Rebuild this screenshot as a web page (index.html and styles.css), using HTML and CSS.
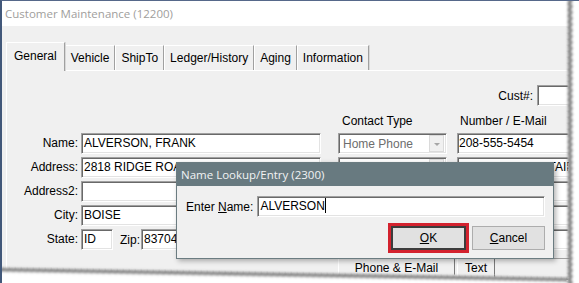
FILE: index.html
```html
<!DOCTYPE html>
<html lang="en">
<head>
  <meta charset="UTF-8" />
  <meta name="viewport" content="width=device-width, initial-scale=1.0"/>
  <title>Customer Maintenance</title>
  <link rel="stylesheet" href="styles.css">
</head>
<body>

<div class="window">
  <div class="titlebar">Customer Maintenance (12200)</div>

  <div class="client">
    <div class="tabs">
      <div class="tab active">General</div>
      <div class="tab">Vehicle</div>
      <div class="tab">ShipTo</div>
      <div class="tab">Ledger/History</div>
      <div class="tab">Aging</div>
      <div class="tab">Information</div>
    </div>

    <div class="panel">
      <div class="form">
        <div class="cust">
          <span>Cust#:</span>
          <div class="field cust-box"></div>
        </div>

        <div class="head-spacer"></div>
        <div class="head head-type">Contact Type</div>
        <div class="head head-num">Number / E-Mail</div>

        <!-- row 1 -->
        <div class="lbl">Name:</div>
        <div class="field wide">ALVERSON, FRANK</div>
        <div class="combo"><span>Home Phone</span><div class="drop"></div></div>
        <div class="field num">208-555-5454</div>

        <!-- row 2 -->
        <div class="lbl">Address:</div>
        <div class="field wide">2818 RIDGE ROAD</div>
        <div class="combo"><span></span><div class="drop"></div></div>
        <div class="field num">FRANK@MOUNTAIN.NET</div>

        <!-- row 3 -->
        <div class="lbl">Address2:</div>
        <div class="field wide"></div>
        <div class="combo"><span></span><div class="drop"></div></div>
        <div class="field num"></div>

        <!-- row 4 -->
        <div class="lbl">City:</div>
        <div class="field city">BOISE</div>
        <div class="combo"><span></span><div class="drop"></div></div>
        <div class="field num"></div>

        <!-- row 5 -->
        <div class="lbl">State:</div>
        <div class="state-zip">
          <div class="field state">ID</div>
          <span class="zip-lbl">Zip:</span>
          <div class="field zip">83704</div>
        </div>
        <div class="combo"><span></span><div class="drop"></div></div>
        <div class="field num"></div>

        <div class="btabs">
          <div class="btab phone">Phone &amp; E-Mail</div>
          <div class="btab">Text</div>
        </div>
      </div>
    </div>
  </div>

  <div class="dialog">
    <div class="dialog-title">Name Lookup/Entry (2300)</div>
    <div class="dialog-body">
      <div class="entry">
        <span class="entry-lbl">Enter <u>N</u>ame:</span>
        <div class="field entry-box">ALVERSON<span class="caret"></span></div>
      </div>
      <div class="buttons">
        <div class="btn btn-ok"><u>O</u>K</div>
        <div class="btn"><u>C</u>ancel</div>
      </div>
    </div>
  </div>

  <!-- torn edges of the screenshot -->
  <svg class="tear" width="579" height="283" viewBox="0 0 579 283">
    <defs>
      <pattern id="edgeRight" x="566" y="0" width="30" height="6" patternUnits="userSpaceOnUse">
        <polygon points="5,0 1,2 3,3 0,5 5,6 30,6 30,0" fill="#fff"/>
      </pattern>
      <pattern id="shadeRight" x="567.5" y="0" width="30" height="6" patternUnits="userSpaceOnUse">
        <polyline points="5,0 1,2 3,3 0,5 5,6" fill="none" stroke="#7d7d7d" stroke-width="2"/>
      </pattern>
      <pattern id="edgeBottom" x="0" y="266" width="6" height="30" patternUnits="userSpaceOnUse">
        <polygon points="0,4 2,1 3,3 5,0 6,4 6,30 0,30" fill="#fff"/>
      </pattern>
      <pattern id="shadeBottom" x="0" y="267.5" width="6" height="30" patternUnits="userSpaceOnUse">
        <polyline points="0,4 2,1 3,3 5,0 6,4" fill="none" stroke="#7d7d7d" stroke-width="2"/>
      </pattern>
      <filter id="soft" x="-10%" y="-10%" width="120%" height="120%">
        <feGaussianBlur stdDeviation="0.9"/>
      </filter>
    </defs>
    <g transform="rotate(1 0 266)">
      <rect x="-5" y="266" width="590" height="40" fill="url(#edgeBottom)"/>
      <rect x="-5" y="266" width="590" height="12" fill="url(#shadeBottom)" filter="url(#soft)"/>
    </g>
    <rect x="566" y="-2" width="14" height="290" fill="url(#edgeRight)"/>
    <rect x="566" y="-2" width="10" height="290" fill="url(#shadeRight)" filter="url(#soft)"/>
  </svg>
</div>

</body>
</html>
```

FILE: styles.css
```css
body {
  margin: 0;
  background: #fff;
  font-family: "Liberation Sans", Arial, sans-serif;
  font-size: 12px;
  color: #000;
}

.window {
  position: relative;
  width: 579px;
  height: 283px;
  box-sizing: border-box;
  border-left: 2px solid #42587a;
  border-top: 1px solid #56688a;
  background: #f0f0f0;
  overflow: hidden;
}

.titlebar {
  height: 25px;
  line-height: 25px;
  padding-left: 3px;
  background: #fff;
  font-family: "Open Sans", sans-serif;
  font-size: 11.5px;
  color: #a09e9c;
}

.client {
  padding: 16px 0 0 4px;
}

/* tab strip */
.tabs {
  display: flex;
  align-items: flex-end;
  height: 28px;
}

.tab {
  position: relative;
  height: 24px;
  line-height: 24px;
  padding: 0 5px;
  border-left: 1px solid #fff;
  border-top: 1px solid #fff;
  border-right: 1px solid #a0a0a0;
  box-shadow: 1px 0 0 #d8d8d8;
  white-space: nowrap;
}

.tab.active {
  height: 28px;
  line-height: 26px;
  padding: 0 7px 0 7px;
  margin-bottom: -1px;
  background: #f0f0f0;
  z-index: 1;
}

.panel {
  border-top: 1px solid #fff;
  border-left: 1px solid #fff;
  padding-top: 14px;
}

/* form grid */
.form {
  display: grid;
  grid-template-columns: 74px 257px 119px 120px;
  grid-template-rows: 25px 17px;
  grid-auto-rows: 21px;
  row-gap: 3px;
}

.cust {
  grid-column: 1 / -1;
  display: flex;
  align-items: center;
  justify-content: flex-end;
  height: 21px;
}

.cust span {
  margin-right: 4px;
}

.cust-box {
  width: 40px;
}

.head-spacer {
  grid-column: 1 / 3;
}

.head {
  line-height: 17px;
}

.head-type {
  padding-left: 4px;
}

.head-num {
  padding-left: 3px;
}

.lbl {
  grid-column: 1;
  text-align: right;
  padding-right: 3px;
  line-height: 21px;
}

.field {
  height: 21px;
  box-sizing: border-box;
  background: #fff;
  border: 1px solid;
  border-color: #a0a0a0 #fff #fff #a0a0a0;
  box-shadow: inset 1px 1px 0 #696969, inset -1px -1px 0 #e3e3e3;
  padding: 0 2px;
  line-height: 19px;
  white-space: nowrap;
  overflow: hidden;
}

.wide {
  width: 240px;
}

.city {
  width: 150px;
}

.num {
  width: 120px;
  padding-left: 1px;
}

.state-zip {
  display: flex;
  align-items: center;
}

.state {
  width: 32px;
}

.zip-lbl {
  margin: 0 1px 0 7px;
}

.zip {
  width: 70px;
}

.combo {
  grid-column: 3;
  width: 109px;
  height: 21px;
  box-sizing: border-box;
  display: flex;
  align-items: center;
  justify-content: space-between;
  background: #fff;
  border: 1px solid;
  border-color: #a0a0a0 #fff #fff #a0a0a0;
  box-shadow: inset 1px 1px 0 #696969, inset -1px -1px 0 #e3e3e3;
  padding: 0 2px 0 4px;
  color: #6d6d6d;
  white-space: nowrap;
}

.drop {
  position: relative;
  width: 15px;
  height: 17px;
  box-sizing: border-box;
  background: #f0f0f0;
  border: 1px solid #dadada;
}

.drop::after {
  content: "";
  position: absolute;
  left: 4px;
  top: 7px;
  border-left: 3px solid transparent;
  border-right: 3px solid transparent;
  border-top: 3px solid #a6a6a6;
}

/* tabs under the contact list */
.btabs {
  grid-column: 3 / 5;
  display: flex;
  margin-top: 5px;
  border-top: 1px solid #a0a0a0;
}

.btab {
  height: 20px;
  line-height: 18px;
  padding: 0 7px;
  border-left: 1px solid #fff;
  border-right: 1px solid #7a7a7a;
  border-bottom: 1px solid #7a7a7a;
  margin-right: 2px;
}

.btab.phone {
  width: 101px;
  text-align: center;
}

/* dialog */
.dialog {
  position: absolute;
  left: 174px;
  top: 161px;
  width: 378px;
  box-sizing: border-box;
  border: 1px solid #6b7c81;
  background: #f0f0f0;
  box-shadow: 2px 2px 5px rgba(0, 0, 0, 0.3);
  z-index: 2;
}

.dialog-title {
  height: 23px;
  line-height: 23px;
  padding-left: 4px;
  background: #687a80;
  color: #f1f3f4;
  font-family: "Open Sans", sans-serif;
  font-size: 11.5px;
}

.dialog-body {
  padding: 10px 8px 8px 9px;
}

.entry {
  display: flex;
  align-items: center;
}

.entry-lbl {
  margin-right: 4px;
  white-space: nowrap;
}

.entry-box {
  flex: 1;
  padding-left: 2px;
}

.caret {
  display: inline-block;
  width: 1px;
  height: 15px;
  background: #000;
  vertical-align: -3px;
}

.buttons {
  display: flex;
  justify-content: flex-end;
  gap: 6px;
  margin-top: 9px;
}

.btn {
  width: 73px;
  height: 24px;
  box-sizing: border-box;
  line-height: 22px;
  text-align: center;
  background: #e1e1e1;
  border: 1px solid #adadad;
}

.btn-ok {
  width: 75px;
  border: 2px solid #3c3c3c;
  line-height: 20px;
  outline: 3px solid #d3222e;
}

.tear {
  position: absolute;
  left: -2px;
  top: -1px;
  z-index: 3;
  pointer-events: none;
}
```
